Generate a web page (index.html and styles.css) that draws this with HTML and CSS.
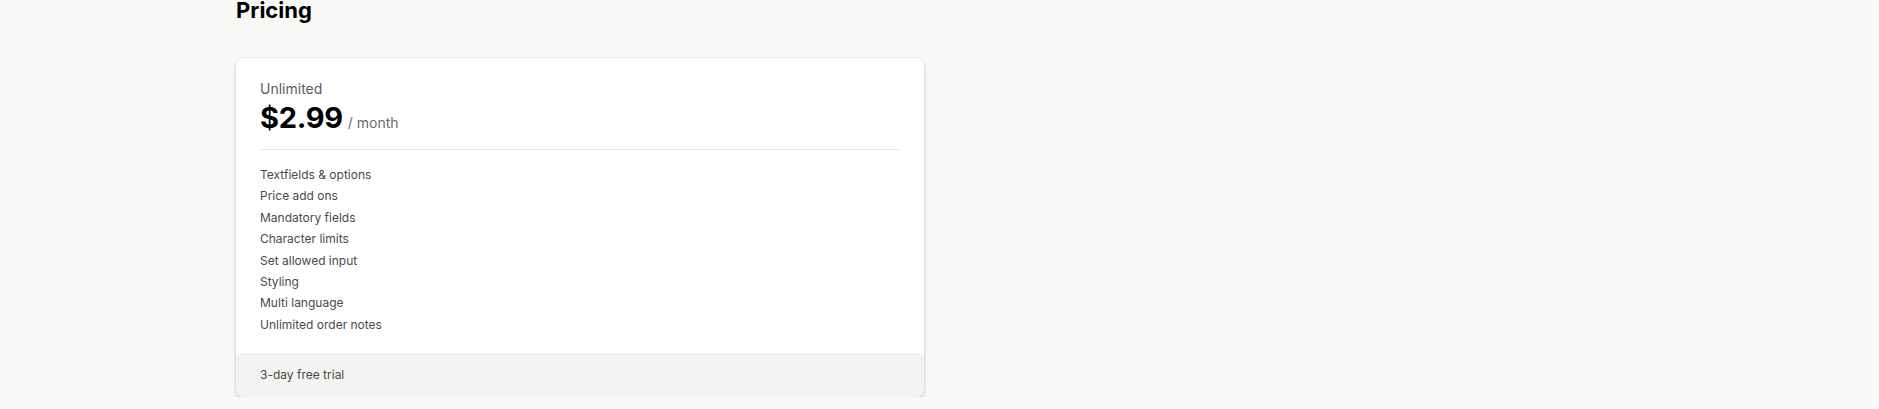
FILE: index.html
```html
<!DOCTYPE html>
<html lang="en">
<head>
<meta charset="utf-8">
<title>Pricing</title>
<link rel="stylesheet" href="styles.css">
</head>
<body>
<main class="page">
  <h1 class="title">Pricing</h1>
  <section class="card">
    <div class="card-body">
      <div class="plan-name">Unlimited</div>
      <div class="price-row"><span class="price">$2.99</span><span class="period">/ month</span></div>
      <hr class="divider">
      <ul class="features">
        <li>Textfields &amp; options</li>
        <li>Price add ons</li>
        <li>Mandatory fields</li>
        <li>Character limits</li>
        <li>Set allowed input</li>
        <li>Styling</li>
        <li>Multi language</li>
        <li>Unlimited order notes</li>
      </ul>
    </div>
    <div class="card-footer">3-day free trial</div>
  </section>
</main>
</body>
</html>
```
FILE: styles.css
```css
html, body {
  margin: 0;
  padding: 0;
  background: #f9f9f8;
  font-family: Inter, "Noto Sans", sans-serif;
  color: #303030;
}
.page {
  padding: 0 0 0 236px;
  width: 688px;
}
.title {
  margin: 0;
  font-size: 22px;
  line-height: 20px;
  font-weight: 700;
  color: #000;
}
.card {
  margin-top: 38px;
  background: #fff;
  border-radius: 8px;
  overflow: hidden;
  box-shadow: 0 0 0 1px rgba(0,0,0,0.03), 0 2px 4px rgba(0,0,0,0.18);
}
.card-body {
  padding: 21px 24px 18px;
}
.plan-name {
  font-size: 14px;
  line-height: 20px;
  color: #5c5c5c;
}
.price-row {
  display: flex;
  align-items: baseline;
  gap: 5px;
  margin-top: 1px;
  height: 36px;
}
.price {
  font-size: 29px;
  line-height: 36px;
  font-weight: 700;
  color: #000;
  letter-spacing: -0.3px;
}
.period {
  font-size: 14px;
  color: #6b6b6b;
}
.divider {
  border: 0;
  border-top: 1px solid #e3e3e3;
  margin: 13px 0 0;
}
.features {
  list-style: none;
  margin: 14px 0 0;
  padding: 0;
  font-size: 12px;
  line-height: 21.4px;
  color: #4a4a4a;
}
.card-footer {
  background: #f3f3f2;
  padding: 12px 24px;
  font-size: 12px;
  line-height: 20px;
  color: #4a4a4a;
}
```
